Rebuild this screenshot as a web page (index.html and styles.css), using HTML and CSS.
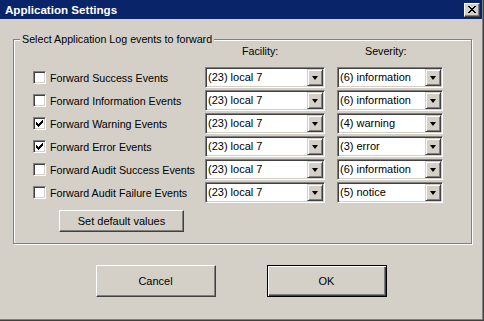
FILE: index.html
```html
<!DOCTYPE html>
<html lang="en">

<head>
    <meta charset="UTF-8" />
    <meta name="viewport" content="width=device-width, initial-scale=1.0" />
    <title>Application Settings</title>
    <link rel="stylesheet" href="styles.css">
</head>

<body>
    <div class="window">
        <div class="titlebar">
            <span class="title">Application Settings</span>
            <span class="close-btn">
                <svg width="8" height="7" viewBox="0 0 8 7">
                    <path d="M0 0h2v1h-2z M6 0h2v1h-2z M1 1h2v1h-2z M5 1h2v1h-2z M2 2h4v1h-4z M3 3h2v1h-2z M2 4h4v1h-4z M1 5h2v1h-2z M5 5h2v1h-2z M0 6h2v1h-2z M6 6h2v1h-2z" fill="#000" />
                </svg>
            </span>
        </div>

        <div class="content">
            <fieldset class="group">
                <legend>Select Application Log events to forward</legend>

                <div class="grid">
                    <div></div>
                    <div class="col-head facility-head">Facility:</div>
                    <div class="col-head severity-head">Severity:</div>

                    <label class="check-row">
                        <span class="check"></span>
                        Forward Success Events
                    </label>
                    <div class="combo"><span class="combo-value">(23) local 7</span><span class="combo-btn"></span></div>
                    <div class="combo"><span class="combo-value">(6) information</span><span class="combo-btn"></span></div>

                    <label class="check-row">
                        <span class="check"></span>
                        Forward Information Events
                    </label>
                    <div class="combo"><span class="combo-value">(23) local 7</span><span class="combo-btn"></span></div>
                    <div class="combo"><span class="combo-value">(6) information</span><span class="combo-btn"></span></div>

                    <label class="check-row">
                        <span class="check checked"></span>
                        Forward Warning Events
                    </label>
                    <div class="combo"><span class="combo-value">(23) local 7</span><span class="combo-btn"></span></div>
                    <div class="combo"><span class="combo-value">(4) warning</span><span class="combo-btn"></span></div>

                    <label class="check-row">
                        <span class="check checked"></span>
                        Forward Error Events
                    </label>
                    <div class="combo"><span class="combo-value">(23) local 7</span><span class="combo-btn"></span></div>
                    <div class="combo"><span class="combo-value">(3) error</span><span class="combo-btn"></span></div>

                    <label class="check-row">
                        <span class="check"></span>
                        Forward Audit Success Events
                    </label>
                    <div class="combo"><span class="combo-value">(23) local 7</span><span class="combo-btn"></span></div>
                    <div class="combo"><span class="combo-value">(6) information</span><span class="combo-btn"></span></div>

                    <label class="check-row">
                        <span class="check"></span>
                        Forward Audit Failure Events
                    </label>
                    <div class="combo"><span class="combo-value">(23) local 7</span><span class="combo-btn"></span></div>
                    <div class="combo"><span class="combo-value">(5) notice</span><span class="combo-btn"></span></div>
                </div>

                <button class="btn default-values">Set default values</button>
            </fieldset>

            <div class="actions">
                <button class="btn action">Cancel</button>
                <button class="btn action btn-default">OK</button>
            </div>
        </div>
    </div>
</body>

</html>
```

FILE: styles.css
```css
body {
    margin: 0;
    font-family: 'Liberation Sans', Arial, sans-serif;
    font-size: 10.7px;
    color: #000;
    background: #d4d0c8;
}

.window {
    width: 484px;
    height: 321px;
    box-sizing: border-box;
    background: #d4d0c8;
    box-shadow: inset -1px -1px 0 #404040, inset -2px -2px 0 #808080;
}

.titlebar {
    height: 19px;
    background: #0a246a;
    margin-right: 2px;
    display: flex;
    align-items: center;
    justify-content: space-between;
    padding: 0 2px 0 5px;
}

.title {
    color: #fff;
    font-weight: bold;
    font-size: 11.6px;
}

.close-btn {
    width: 16px;
    height: 14px;
    box-sizing: border-box;
    background: #d4d0c8;
    border: 1px solid;
    border-color: #fff #404040 #404040 #fff;
    box-shadow: inset -1px -1px 0 #808080;
    display: flex;
    align-items: center;
    justify-content: center;
    padding: 0 1px 1px 0;
}

.content {
    padding-top: 14px;
}

.group {
    margin: 0 12px 0 13px;
    padding: 0 0 11px 19px;
    border: 1px solid #808080;
    box-shadow: inset 1px 1px 0 #fff, 1px 1px 0 #fff;
    min-width: 0;
}

.group legend {
    margin-left: -13px;
    padding: 0 2px;
    line-height: 13px;
    background: #d4d0c8;
}

.grid {
    display: grid;
    grid-template-columns: 160px 120px 106px;
    grid-template-rows: 19px;
    grid-auto-rows: 21px;
    column-gap: 12px;
    row-gap: 2px;
}

.col-head {
    line-height: 13px;
    margin-top: -1px;
}

.facility-head {
    padding-left: 37px;
}

.severity-head {
    padding-left: 28px;
}

.check-row {
    display: flex;
    align-items: center;
    gap: 4px;
    white-space: nowrap;
}

.check {
    flex: none;
    width: 13px;
    height: 13px;
    box-sizing: border-box;
    background: #fff;
    border: 1px solid;
    border-color: #808080 #fff #fff #808080;
    box-shadow: inset 1px 1px 0 #404040, inset -1px -1px 0 #d4d0c8;
}

.check.checked {
    background: #fff url("data:image/svg+xml,%3Csvg xmlns='http://www.w3.org/2000/svg' width='7' height='7'%3E%3Cpath d='M0 2h1v3h-1z M1 3h1v3h-1z M2 4h1v3h-1z M3 3h1v3h-1z M4 2h1v3h-1z M5 1h1v3h-1z M6 0h1v3h-1z'/%3E%3C/svg%3E") no-repeat 2px 2px;
}

.combo {
    display: flex;
    box-sizing: border-box;
    height: 21px;
    background: #fff;
    border: 1px solid;
    border-color: #808080 #fff #fff #808080;
    box-shadow: inset 1px 1px 0 #404040, inset -1px -1px 0 #d4d0c8;
    padding: 1px 1px 1px 1px;
}

.combo-value {
    flex: 1;
    padding-left: 1px;
    line-height: 17px;
    font-size: 11px;
}

.combo-btn {
    width: 16px;
    height: 17px;
    box-sizing: border-box;
    background: #d4d0c8;
    border: 1px solid;
    border-color: #d4d0c8 #404040 #404040 #d4d0c8;
    box-shadow: inset 1px 1px 0 #fff, inset -1px -1px 0 #808080;
    display: flex;
    align-items: center;
    justify-content: center;
}

.combo-btn::after {
    content: "";
    border-left: 3.5px solid transparent;
    border-right: 3.5px solid transparent;
    border-top: 4px solid #000;
    margin-right: 1px;
}

.btn {
    font-family: inherit;
    font-size: 11px;
    color: #000;
    background: #d4d0c8;
    border: 1px solid;
    border-color: #fff #404040 #404040 #fff;
    box-shadow: inset -1px -1px 0 #808080;
    padding: 0;
    border-radius: 0;
}

.default-values {
    width: 125px;
    height: 22px;
    margin: 7px 0 0 26px;
}

.actions {
    display: flex;
    justify-content: center;
    gap: 51px;
    margin-top: 21px;
    padding-right: 2px;
}

.action {
    width: 120px;
    height: 32px;
}

.btn-default {
    border: 1px solid #000;
    box-shadow: inset 1px 1px 0 #fff, inset -1px -1px 0 #404040, inset -2px -2px 0 #808080;
}
```
